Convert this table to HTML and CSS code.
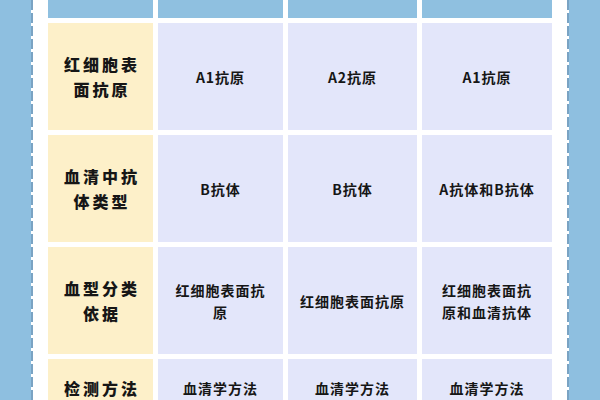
FILE: index.html
```html
<!DOCTYPE html>
<html lang="zh">
<head>
<meta charset="utf-8">
<link rel="stylesheet" href="styles.css">
</head>
<body>
<div class="page">
  <div class="band"></div>
  <div class="dash"></div>
  <div class="sheet">
    <div class="table">
      <div class="head"></div><div class="head"></div><div class="head"></div><div class="head"></div>

      <div class="label">红细胞表<br>面抗原</div>
      <div class="cell">A1抗原</div>
      <div class="cell">A2抗原</div>
      <div class="cell">A1抗原</div>

      <div class="label">血清中抗<br>体类型</div>
      <div class="cell">B抗体</div>
      <div class="cell">B抗体</div>
      <div class="cell">A抗体和B抗体</div>

      <div class="label">血型分类<br>依据</div>
      <div class="cell">红细胞表面抗<br>原</div>
      <div class="cell">红细胞表面抗原</div>
      <div class="cell">红细胞表面抗<br>原和血清抗体</div>

      <div class="label">检测方法</div>
      <div class="cell">血清学方法</div>
      <div class="cell">血清学方法</div>
      <div class="cell">血清学方法</div>
    </div>
  </div>
  <div class="dash"></div>
  <div class="band"></div>
</div>
</body>
</html>
```
FILE: styles.css
```css
html, body {
  margin: 0;
  padding: 0;
  background: #ffffff;
  overflow: hidden;
}
.page {
  display: flex;
  width: 600px;
  height: 400px;
  overflow: hidden;
  font-family: "Noto Sans CJK SC", "Noto Sans", sans-serif;
  color: #161616;
}
.band {
  width: 31px;
  flex: none;
  background: #8ebfe0;
}
.dash {
  width: 2px;
  flex: none;
  background: repeating-linear-gradient(to bottom, #7aa3c3 0, #7aa3c3 10px, #ffffff 10px, #ffffff 13px);
}
.sheet {
  flex: 1;
  display: flex;
  justify-content: center;
  align-items: flex-start;
}
.table {
  display: grid;
  grid-template-columns: 105px 125px 129px 130px;
  grid-template-rows: 18px repeat(3, 107px) 58px;
  gap: 5px;
}
.head {
  background: #8fc0e0;
}
.label {
  background: #fdf0c9;
  display: flex;
  align-items: center;
  justify-content: center;
  text-align: center;
  font-size: 16px;
  font-weight: 900;
  letter-spacing: 3px;
  line-height: 25px;
  padding-left: 3px;
}
.cell {
  background: #e3e6fa;
  display: flex;
  align-items: center;
  justify-content: center;
  text-align: center;
  font-size: 14px;
  font-weight: 700;
  letter-spacing: 1px;
  line-height: 22px;
}
```
